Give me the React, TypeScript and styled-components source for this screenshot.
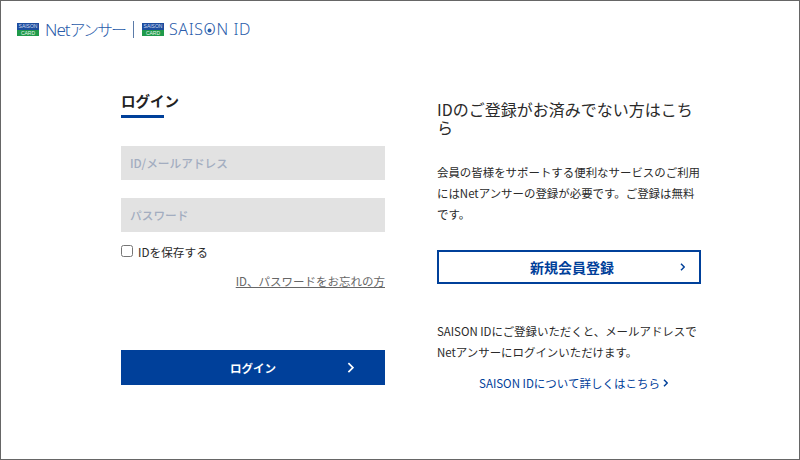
import styled, { createGlobalStyle } from 'styled-components'

const GlobalStyle = createGlobalStyle`
	html, body {
		margin: 0;
		padding: 0;
		background: #fff;
	}
	body {
		font-family: "Noto Sans CJK JP", "Noto Sans", sans-serif;
		color: #333;
	}
	* {
		box-sizing: border-box;
	}
`

const Card = () => (
	<CardMark>
		<CardTop>SAISON</CardTop>
		<CardBottom>CARD</CardBottom>
	</CardMark>
)

const Chevron = ({ size, weight }: { size: number; weight: number }) => (
	<svg width={size} height={size * 1.6} viewBox="0 0 10 16" fill="none">
		<path d="M2 1.5 L8.5 8 L2 14.5" stroke="currentColor" strokeWidth={weight} />
	</svg>
)

const App = () => {
	return (
		<>
			<GlobalStyle />
			<Page>
				<Header>
					<Card />
					<BrandName>
						<BrandLatin>Net</BrandLatin>アンサー
					</BrandName>
					<BrandDivider />
					<Card />
					<SaisonName>
						SAIS<RingLetter>O</RingLetter>N ID
					</SaisonName>
				</Header>
				<Columns>
					<LoginColumn>
						<Heading>ログイン</Heading>
						<Field placeholder="ID/メールアドレス" />
						<Field $second placeholder="パスワード" />
						<SaveRow>
							<SaveCheck type="checkbox" />
							IDを保存する
						</SaveRow>
						<ForgotRow>
							<ForgotLink href="#">ID、パスワードをお忘れの方</ForgotLink>
						</ForgotRow>
						<LoginButton>
							ログイン
							<LoginArrow>
								<Chevron size={7} weight={2.4} />
							</LoginArrow>
						</LoginButton>
					</LoginColumn>
					<RegisterColumn>
						<RegisterTitle>IDのご登録がお済みでない方はこちら</RegisterTitle>
						<RegisterText>
							会員の皆様をサポートする便利なサービスのご利用にはNetアンサーの登録が必要です。ご登録は無料です。
						</RegisterText>
						<RegisterButton>
							新規会員登録
							<RegisterArrow>
								<Chevron size={5} weight={3} />
							</RegisterArrow>
						</RegisterButton>
						<SaisonText>
							SAISON IDにご登録いただくと、メールアドレスでNetアンサーにログインいただけます。
						</SaisonText>
						<SaisonLink href="#">
							SAISON IDについて詳しくはこちら
							<Chevron size={5} weight={3} />
						</SaisonLink>
					</RegisterColumn>
				</Columns>
			</Page>
		</>
	)
}

const Page = styled.div`
	width: 800px;
	height: 460px;
	border: 1px solid #666;
	overflow: hidden;
	background: #fff;
`

const Header = styled.header`
	display: flex;
	align-items: center;
	height: 17px;
	margin-top: 20px;
	padding-left: 16px;
	color: #2a5caa;
`

const CardMark = styled.div`
	display: flex;
	flex-direction: column;
	width: 22px;
	height: 13px;
	flex: none;
`

const CardTop = styled.span`
	display: block;
	height: 7px;
	background: #1d4d9e;
	color: #cfdcf0;
	font: 5px/7px "Liberation Sans", sans-serif;
	text-align: center;
	white-space: nowrap;
	overflow: hidden;
`

const CardBottom = styled.span`
	display: block;
	height: 6px;
	background: #1f9a4a;
	color: #e6f6ec;
	font: 5px/6px "Liberation Sans", sans-serif;
	text-align: center;
`

const BrandName = styled.span`
	width: 81px;
	margin-left: 6px;
	font-size: 16px;
	font-weight: 300;
	line-height: 17px;
	letter-spacing: -2px;
	white-space: nowrap;
`

const BrandLatin = styled.span`
	font-family: "Noto Sans", sans-serif;
	font-size: 17px;
	font-weight: 300;
	letter-spacing: -1px;
`

const BrandDivider = styled.span`
	width: 1px;
	height: 17px;
	margin: 0 8px 0 7px;
	background: #5b7ba8;
`

const SaisonName = styled.span`
	margin-left: 5px;
	font-family: "Noto Sans", sans-serif;
	font-size: 16px;
	font-weight: 300;
	line-height: 17px;
	letter-spacing: 0.6px;
	white-space: nowrap;
`

const RingLetter = styled.span`
	position: relative;
	display: inline-block;
	&::after {
		content: '';
		position: absolute;
		left: 50%;
		top: 50%;
		width: 4px;
		height: 4px;
		border-radius: 50%;
		background: #2a5caa;
		transform: translate(-62%, -38%);
	}
`

const Columns = styled.main`
	display: flex;
	gap: 52px;
	padding-left: 120px;
	margin-top: 52px;
`

const LoginColumn = styled.section`
	display: flex;
	flex-direction: column;
	width: 264px;
`

const Heading = styled.h2`
	width: 43px;
	margin: 0 0 28px;
	padding-bottom: 4px;
	border-bottom: 3px solid #00409a;
	color: #222;
	font-size: 14.5px;
	font-weight: 700;
	line-height: 21px;
	white-space: nowrap;
`

const Field = styled.input<{ $second?: boolean }>`
	display: block;
	width: 264px;
	height: 34px;
	margin-top: ${(p) => (p.$second ? '18px' : '0')};
	padding: 0 9px 2px;
	border: 0;
	border-radius: 0;
	background: #e2e2e2;
	font-family: inherit;
	font-size: 11.7px;
	font-weight: 500;
	&::placeholder {
		color: #a3adc0;
		opacity: 1;
	}
`

const SaveRow = styled.label`
	display: flex;
	align-items: center;
	height: 20px;
	margin-top: 9px;
	color: #2a2a2a;
	font-size: 11.7px;
	font-weight: 400;
`

const SaveCheck = styled.input`
	width: 12px;
	height: 12px;
	margin: 0 5px 0 0;
`

const ForgotRow = styled.div`
	display: flex;
	justify-content: flex-end;
	margin-top: 11px;
`

const ForgotLink = styled.a`
	color: #666;
	font-size: 11.5px;
	font-weight: 400;
	line-height: 18px;
	text-decoration: underline;
`

const LoginButton = styled.button`
	position: relative;
	display: flex;
	align-items: center;
	justify-content: center;
	width: 264px;
	height: 35px;
	margin-top: 60px;
	border: 0;
	background: #00409a;
	color: #fff;
	font-family: inherit;
	font-size: 11.5px;
	font-weight: 700;
`

const LoginArrow = styled.span`
	position: absolute;
	right: 31px;
	top: 12px;
	display: flex;
`

const RegisterColumn = styled.section`
	display: flex;
	flex-direction: column;
	width: 264px;
	margin-top: 10px;
`

const RegisterTitle = styled.h3`
	margin: 0 0 26px;
	color: #2a2a2a;
	font-size: 16px;
	font-weight: 400;
	line-height: 18px;
`

const RegisterText = styled.p`
	margin: 0 0 25px;
	color: #2a2a2a;
	font-size: 11.45px;
	font-weight: 400;
	line-height: 21px;
`

const RegisterButton = styled.button`
	position: relative;
	display: flex;
	align-items: center;
	justify-content: center;
	width: 264px;
	height: 34px;
	padding: 0 0 0 6px;
	border: 2px solid #00409a;
	background: #fff;
	color: #00409a;
	font-family: inherit;
	font-size: 14px;
	font-weight: 700;
`

const RegisterArrow = styled.span`
	position: absolute;
	right: 14px;
	top: 11px;
	display: flex;
`

const SaisonText = styled.p`
	margin: 37px 0 11px;
	color: #2a2a2a;
	font-size: 11.45px;
	font-weight: 400;
	line-height: 21px;
`

const SaisonLink = styled.a`
	display: flex;
	align-items: center;
	justify-content: center;
	gap: 3px;
	padding-left: 9px;
	color: #00409a;
	font-size: 11.5px;
	font-weight: 400;
	line-height: 18px;
	text-decoration: none;
`

export default App
